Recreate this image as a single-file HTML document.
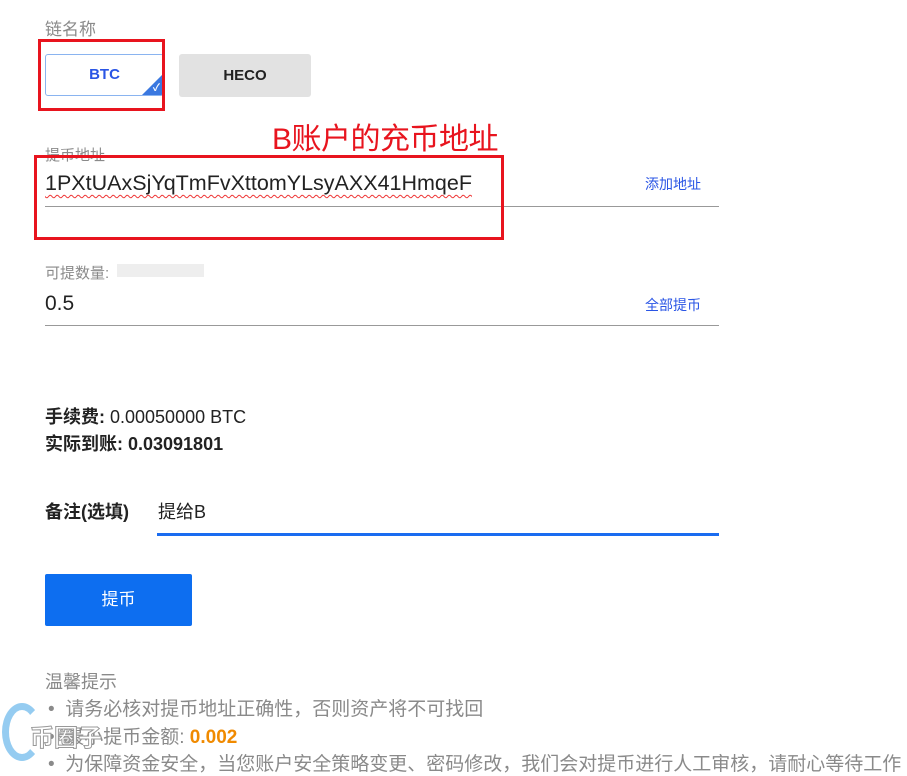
<!DOCTYPE html>
<html><head><meta charset="utf-8"><style>
body{margin:0;width:907px;height:763px;overflow:hidden;background:#fff;font-family:"Liberation Sans","Noto Sans CJK SC",sans-serif;position:relative}
.a{position:absolute;white-space:nowrap}
.g{color:#8a8a8a}
</style></head><body>
<div class="a g" style="left:45px;top:15px;font-size:17px">链名称</div>
<div class="a" style="left:45px;top:54px;width:119px;height:42px;border:1px solid #8ab4f0;border-radius:3px;box-sizing:border-box;color:#2a55e5;font-size:15px;font-weight:bold;text-align:center;line-height:40px;overflow:hidden">BTC
<div style="position:absolute;right:0;bottom:0;width:0;height:0;border-left:21px solid transparent;border-bottom:21px solid #3a78e0"></div>
<div style="position:absolute;right:3px;bottom:1px;color:#fff;font-size:10px;line-height:10px">✓</div></div>
<div class="a" style="left:179px;top:54px;width:132px;height:43px;background:#e2e2e2;border-radius:3px;text-align:center;line-height:43px;font-size:15px;font-weight:bold;color:#222">HECO</div>
<div class="a" style="left:38px;top:39px;width:127px;height:72px;border:3px solid #e8141e;box-sizing:border-box"></div>
<div class="a" style="left:272px;top:114px;font-size:30px;color:#e8141e;letter-spacing:-0.5px">B账户的充币地址</div>
<div class="a g" style="left:45px;top:144px;font-size:15px">提币地址</div>
<div class="a" style="left:45px;top:171px;font-size:21.5px;color:#222;text-decoration:underline wavy #e33;text-decoration-thickness:1px;text-underline-offset:4px">1PXtUAxSjYqTmFvXttomYLsyAXX41HmqeF</div>
<div class="a" style="left:645px;top:174px;font-size:14px;color:#2a55e5">添加地址</div>
<div class="a" style="left:45px;top:206px;width:674px;height:1px;background:#999"></div>
<div class="a" style="left:34px;top:155px;width:470px;height:85px;border:3px solid #e8141e;box-sizing:border-box"></div>
<div class="a g" style="left:45px;top:262px;font-size:15px">可提数量:</div>
<div class="a" style="left:117px;top:264px;width:87px;height:13px;background:#eee"></div>
<div class="a" style="left:45px;top:292px;font-size:21px;color:#222">0.5</div>
<div class="a" style="left:645px;top:295px;font-size:14px;color:#2a55e5">全部提币</div>
<div class="a" style="left:45px;top:325px;width:674px;height:1px;background:#999"></div>
<div class="a" style="left:45px;top:403px;font-size:18px;color:#222"><b>手续费:</b> 0.00050000 BTC</div>
<div class="a" style="left:45px;top:430px;font-size:18px;color:#222;font-weight:bold">实际到账: 0.03091801</div>
<div class="a" style="left:45px;top:498px;font-size:18px;font-weight:bold;color:#222">备注(选填)</div>
<div class="a" style="left:158px;top:498px;font-size:18px;color:#222">提给B</div>
<div class="a" style="left:157px;top:533px;width:562px;height:3px;background:#1a6cf0"></div>
<div class="a" style="left:45px;top:574px;width:147px;height:52px;background:#0d6ef0;border-radius:2px;color:#fff;font-size:17px;text-align:center;line-height:52px">提币</div>
<div class="a g" style="left:45px;top:668px;font-size:18px">温馨提示</div>
<div class="a g" style="left:48px;top:694px;font-size:19px">• &nbsp;请务必核对提币地址正确性，否则资产将不可找回</div>
<div class="a g" style="left:48px;top:722px;font-size:19px">• &nbsp;最小提币金额: <b style="color:#f08a00">0.002</b></div>
<div class="a g" style="left:48px;top:749px;font-size:19px">• &nbsp;为保障资金安全，当您账户安全策略变更、密码修改，我们会对提币进行人工审核，请耐心等待工作</div>
<div class="a" style="left:2px;top:703px;width:40px;height:58px;border-radius:50%;border:7px solid #7bc0ee;border-right-color:transparent;box-sizing:border-box;opacity:.8"></div>
<div class="a" style="left:30px;top:718px;font-size:24px;color:#fff;-webkit-text-stroke:1px #999;font-weight:bold">币圈子</div>
</body></html>
